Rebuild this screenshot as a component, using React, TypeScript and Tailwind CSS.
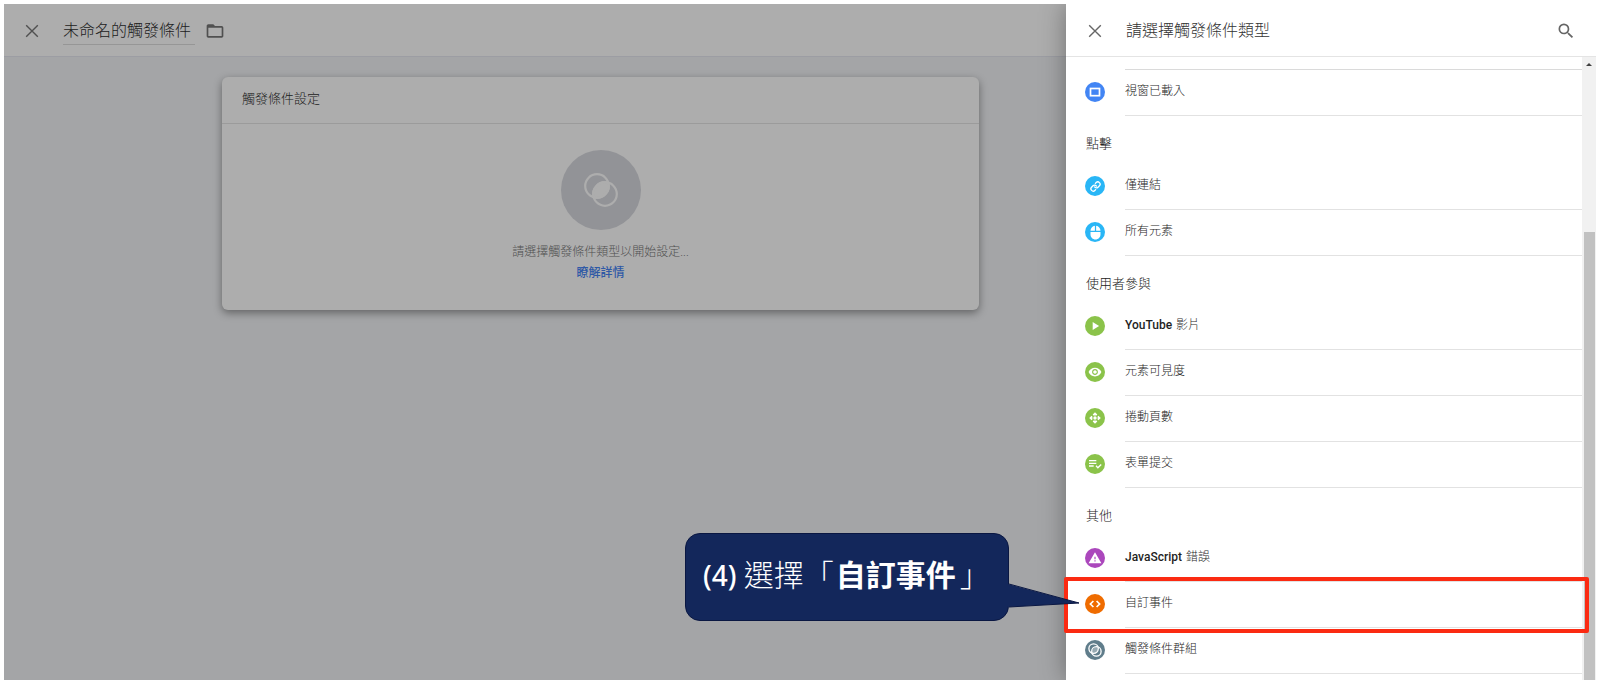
import React from "react";
import { Link } from "lucide-react";
import {
  MdFolderOpen,
  MdMouse,
  MdPlayArrow,
  MdPlaylistAddCheck,
  MdSearch,
  MdVisibility,
  MdWarning,
} from "react-icons/md";

type Item = { latin?: string; label: string; tone: string; icon: React.ReactNode; marked?: boolean };
type Group = { title?: string; items: Item[] };

function CloseIcon() {
  return (
    <svg viewBox="0 0 14 14" className="size-[14px]" fill="none" stroke="currentColor" strokeWidth="1.4" aria-hidden="true">
      <path d="M1.2 1.2 12.8 12.8M12.8 1.2 1.2 12.8" />
    </svg>
  );
}

function TriggerIcon({ className }: { className: string }) {
  return (
    <svg viewBox="0 0 34 34" className={className} fill="none" stroke="currentColor" strokeWidth="2.2" aria-hidden="true">
      <circle cx="13" cy="13" r="11.8" />
      <circle cx="21" cy="21" r="11.8" />
      <path d="M24.3 9.7A11.8 11.8 0 0 1 9.7 24.3A11.8 11.8 0 0 1 24.3 9.7Z" fill="currentColor" />
    </svg>
  );
}

function TriggerGroupIcon() {
  return (
    <svg viewBox="0 0 14 14" className="size-[14px]" fill="none" stroke="currentColor" aria-hidden="true">
      <circle cx="5.6" cy="5.6" r="4.7" strokeWidth="1.3" />
      <circle cx="8.4" cy="8.4" r="4.7" strokeWidth="1.3" />
      <path d="M9.8 4.2A4.7 4.7 0 0 1 4.2 9.8A4.7 4.7 0 0 1 9.8 4.2Z" fill="currentColor" fillOpacity="0.35" stroke="none" />
    </svg>
  );
}

function WindowIcon() {
  return (
    <svg viewBox="0 0 12 12" className="size-[12px]" fill="none" stroke="currentColor" strokeWidth="1.7" aria-hidden="true">
      <rect x="1.5" y="2.5" width="9" height="7.2" />
    </svg>
  );
}

function ScrollIcon() {
  return (
    <svg viewBox="0 0 12 12" className="size-[12px]" fill="currentColor" aria-hidden="true">
      <circle cx="6" cy="6" r="1.7" />
      <path d="M6 .2 8.3 2.6 7.6 3.4H4.4L3.7 2.6ZM6 11.8 3.7 9.4 4.4 8.6H7.6L8.3 9.4ZM.2 6 2.6 3.7 3.4 4.4V7.6L2.6 8.3ZM11.8 6 9.4 8.3 8.6 7.6V4.4L9.4 3.7Z" />
    </svg>
  );
}

function CodeIcon() {
  return (
    <svg viewBox="0 0 12 12" className="size-[12px]" fill="none" stroke="currentColor" strokeWidth="1.7" aria-hidden="true">
      <path d="M4.4 3 1.4 6 4.4 9M7.6 3 10.6 6 7.6 9" />
    </svg>
  );
}

const groups: Group[] = [
  { items: [{ label: "視窗已載入", tone: "bg-[#4285f4]", icon: <WindowIcon /> }] },
  {
    title: "點擊",
    items: [
      { label: "僅連結", tone: "bg-[#29b6f6]", icon: <Link className="size-[11px]" strokeWidth={3} /> },
      { label: "所有元素", tone: "bg-[#29b6f6]", icon: <MdMouse className="size-[15px]" /> },
    ],
  },
  {
    title: "使用者參與",
    items: [
      { latin: "YouTube", label: "影片", tone: "bg-[#8bc34a]", icon: <MdPlayArrow className="size-[14px]" /> },
      { label: "元素可見度", tone: "bg-[#8bc34a]", icon: <MdVisibility className="size-[14px]" /> },
      { label: "捲動頁數", tone: "bg-[#8bc34a]", icon: <ScrollIcon /> },
      { label: "表單提交", tone: "bg-[#8bc34a]", icon: <MdPlaylistAddCheck className="size-4" /> },
    ],
  },
  {
    title: "其他",
    items: [
      { latin: "JavaScript", label: "錯誤", tone: "bg-[#ab47bc]", icon: <MdWarning className="size-[14px]" /> },
      { label: "自訂事件", tone: "bg-[#ef6c00]", icon: <CodeIcon />, marked: true },
      { label: "觸發條件群組", tone: "bg-[#607d8b]", icon: <TriggerGroupIcon /> },
    ],
  },
];

function Callout() {
  return (
    <>
      <div className="pointer-events-none absolute -top-[5px] right-[-7px] -bottom-[5px] -left-[2px] z-10 rounded-[2px] border-4 border-[#fb2a12]" />
      <div className="pointer-events-none absolute right-[573px] -top-[49px] z-20 flex h-[88px] w-[324px] items-center rounded-[15px] border border-[#0a1742] bg-[#13275b] pb-1 pl-[17px] text-[30px] whitespace-nowrap text-white">
        <span className="font-['Noto_Sans','Noto_Sans_CJK_TC',sans-serif] text-[28px] font-medium">(4)&nbsp;</span>
        <span className="font-light">選擇「</span>
        <strong className="ml-[2px] font-bold">自訂事件</strong>
        <span className="ml-1 font-light">」</span>
        <svg viewBox="0 0 72 26" className="absolute top-[49px] -right-[72px] h-[26px] w-[72px]" aria-hidden="true">
          <path d="M0 1 71 20 0 24Z" fill="#13275b" />
          <path d="M1 1 71 20 1 24" fill="none" stroke="#0a1742" />
        </svg>
      </div>
    </>
  );
}

function Row({ item }: { item: Item }) {
  return (
    <li className="relative">
      <button type="button" className="flex h-[46px] w-full items-stretch gap-5 pl-[19px] text-left">
        <span className={`mt-3 flex size-5 shrink-0 items-center justify-center rounded-full text-white ${item.tone}`}>
          {item.icon}
        </span>
        <span className="flex flex-1 items-center gap-1 border-b border-[#e2e2e2] pb-1 text-xs text-[#1f1f1f]">
          {item.latin && <span className="font-medium">{item.latin}</span>}
          <span className="font-light">{item.label}</span>
        </span>
      </button>
      {item.marked && <Callout />}
    </li>
  );
}

export default function App() {
  return (
    <div className="flex h-screen overflow-hidden bg-white px-1 pt-1 font-['Roboto','Noto_Sans_CJK_TC',sans-serif]">
      <main className="min-w-0 flex-1 bg-[#a4a5a7]">
        <header className="flex h-[53px] items-center border-b border-[#9c9da3] bg-[#adadad] pt-[2px] pl-[21px] text-[#505050]">
          <button type="button" aria-label="關閉">
            <CloseIcon />
          </button>
          <h1 className="ml-6 border-b border-[#969696] pr-1 text-base leading-[27px] font-light text-[#1c1c1c]">
            未命名的觸發條件
          </h1>
          <button type="button" aria-label="資料夾" className="ml-[10px]">
            <MdFolderOpen className="size-5" />
          </button>
        </header>
        <section className="mt-5 mr-[87px] ml-[218px] rounded-[6px] bg-[#adadad] shadow-[0_3px_8px_rgba(0,0,0,0.4)]">
          <h2 className="flex h-[47px] items-center border-b border-[#9b9b9b] pb-[2px] pl-5 text-[13px] font-light text-[#1c1c1c]">
            觸發條件設定
          </h2>
          <div className="flex flex-col items-center pt-[26px] pb-[26px] text-xs">
            <div className="flex size-20 items-center justify-center rounded-full bg-[#929397] text-[#adadad]">
              <TriggerIcon className="size-[34px]" />
            </div>
            <p className="mt-3 leading-5 font-light text-[#505050]">請選擇觸發條件類型以開始設定...</p>
            <a href="#" className="leading-[22px] font-medium text-[#2f59a6]">
              瞭解詳情
            </a>
          </div>
        </section>
      </main>

      <aside className="relative flex w-[530px] shrink-0 flex-col bg-white shadow-[0_0_24px_rgba(0,0,0,0.35)] [clip-path:inset(0_0_0_-400px)]">
        <header className="flex h-[53px] shrink-0 items-center border-b border-[#e4e4e4] pt-[2px] pr-5 pl-[22px] text-[#666]">
          <button type="button" aria-label="關閉">
            <CloseIcon />
          </button>
          <h2 className="ml-6 flex-1 text-base font-light text-[#333]">請選擇觸發條件類型</h2>
          <button type="button" aria-label="搜尋">
            <MdSearch className="size-5" />
          </button>
        </header>
        <div className="flex min-h-0 flex-1">
          <div className="min-w-0 flex-1 pt-3">
            <div className="ml-[59px] border-t border-[#dadada]" />
            {groups.map((group, index) => (
              <section key={index}>
                {group.title && (
                  <h3 className="flex h-12 items-center pt-2 pl-5 text-[13px] font-light text-[#222]">{group.title}</h3>
                )}
                <ul>
                  {group.items.map((item) => (
                    <Row key={item.label} item={item} />
                  ))}
                </ul>
              </section>
            ))}
          </div>
          <div className="flex w-[14px] flex-col items-center bg-[#f1f1f1]" aria-hidden="true">
            <svg viewBox="0 0 6 3" className="mt-[6px] h-[3px] w-[6px]" fill="#404040">
              <path d="M0 3 3 0 6 3Z" />
            </svg>
            <div className="mt-[166px] w-[11px] flex-1 bg-[#c1c1c1]" />
          </div>
        </div>
      </aside>
    </div>
  );
}
